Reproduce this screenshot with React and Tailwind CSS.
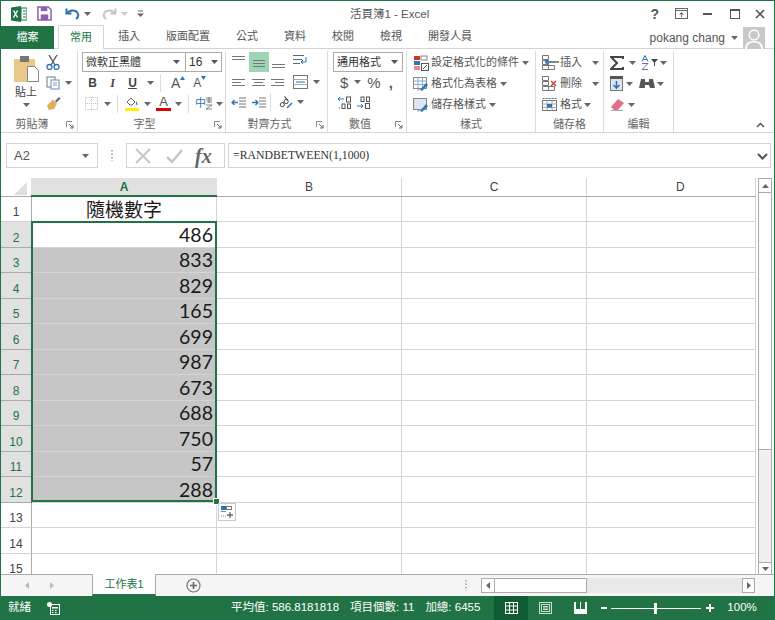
const Caret = ({ c = '#666', className = '' }) => (
  <svg width="7" height="4" viewBox="0 0 7 4" className={`shrink-0 ${className}`}><path d="M0 0h7L3.5 4z" fill={c} /></svg>
);
const Launcher = () => (
  <svg width="8" height="8" viewBox="0 0 8 8" className="shrink-0"><path d="M.5 6V.5H6" fill="none" stroke="#888" /><path d="M3 3l4 4M7 4v3H4" fill="none" stroke="#666" /></svg>
);
const Lines = ({ rows }) => (
  <svg width="16" height="13" viewBox="0 0 16 13">
    {rows.map((r, i) => <rect key={i} x={r[0]} y={r[1]} width={r[2]} height="1" fill="#777" />)}
  </svg>
);
const Group = ({ label, w, children, launcher }) => (
  <div className={`flex flex-col shrink-0 h-[81px] mt-[2px] border-r border-[#dcdcdc] relative ${w}`}>
    <div className="flex-1 min-h-0">{children}</div>
    <div className={`h-[16px] flex items-center justify-center text-[11px] text-[#666] relative ${launcher ? 'pr-[14px]' : ''}`}>
      {label}
      {launcher && <span className="absolute right-[3px] top-[5px]"><Launcher /></span>}
    </div>
  </div>
);
const Row = ({ children, className = '' }) => <div className={`flex items-center h-[21px] ${className}`}>{children}</div>;

const StyleIcon = ({ kind }) => (
  <svg width="16" height="16" viewBox="0 0 16 16" className="shrink-0">
    {kind === 'cond' ? (
      <>
        <rect x="1" y="1" width="6" height="4" fill="#c0392b" /><rect x="8" y="1" width="6" height="4" fill="#fff" stroke="#888" />
        <rect x="1" y="6" width="6" height="4" fill="#2e75b6" /><rect x="1" y="11" width="6" height="4" fill="#e88" />
        <rect x="8.5" y="8.5" width="7" height="7" fill="#fff" stroke="#555" /><path d="M10 14l4-4" stroke="#555" />
      </>
    ) : (
      <>
        <rect x=".5" y="1.5" width="13" height="11" fill={kind === 'cell' ? '#dce6f2' : '#fff'} stroke="#888" />
        {kind === 'table' && <path d="M.5 5h13M.5 8.5h13M5 1.5v11M9.5 1.5v11" stroke="#8aa9d0" />}
        <path d="M7 14l6-7 2 2-6 6z" fill="#2e75b6" /><path d="M4 15c1-2 2-2 3-1.5z" fill="#2e75b6" />
      </>
    )}
  </svg>
);
const CellIcon = ({ kind }) => (
  <svg width="17" height="15" viewBox="0 0 17 15" className="shrink-0">
    {kind === 'fmt' ? (
      <>
        <rect x=".5" y="3.5" width="14" height="10" fill="#fff" stroke="#777" />
        <path d="M5 3.500v10M10 3.500v10M.5 7h14M.5 10.500h14" stroke="#aaa" />
        <rect x="5" y="7" width="5" height="3.500" fill="#2e75b6" />
        <path d="M.5 1.500h14" stroke="#2e75b6" strokeDasharray="2 1" />
      </>
    ) : (
      <>
        <path d="M.5.5h6v4h-6zM.5 10.500h6v4h-6zM6.500 10.500h6v4h-6z" fill="#fff" stroke="#777" />
        <path d="M.5 5.500h6v4h-6z" fill="#fff" stroke="#777" />
        {kind === 'ins'
          ? <><rect x="8" y="6" width="9" height="2" fill="#888" /><path d="M9 7H4m2-2.500L3.500 7 6 9.500" stroke="#2e75b6" fill="none" strokeWidth="1.300" /></>
          : <path d="M9 5l5 5m0-5l-5 5" stroke="#d9432f" strokeWidth="1.500" />}
      </>
    )}
  </svg>
);

const rowVals = [null, 486, 833, 829, 165, 699, 987, 673, 688, 750, 57, 288, null, null, null];

function Sheet() {
  return (
    <div className="flex-1 min-h-0 flex overflow-hidden">
      <div className="flex-1 min-w-0 flex flex-col overflow-hidden pt-[10px]">
        <div className="flex h-[19px] shrink-0 border-b border-[#ababab]">
          <div className="w-[30px] shrink-0 relative">
            <svg width="13" height="13" viewBox="0 0 13 13" className="absolute right-[4px] bottom-[1px]"><path d="M13 0v13H0z" fill="#dfdfdf" /></svg>
          </div>
          <div className="w-[186px] bg-[#e1e1e1] border-b-2 border-[#217346] text-[#217346] text-[12px] flex items-center justify-center font-semibold h-[19px]">A</div>
          <div className="w-[185px] text-[#444] text-[12px] flex items-center justify-center border-r border-[#d4d4d4]">B</div>
          <div className="w-[185px] text-[#444] text-[12px] flex items-center justify-center border-r border-[#d4d4d4]">C</div>
          <div className="w-[169px] text-[#444] text-[12px] flex items-center pl-[89px] border-r border-[#d4d4d4]">D</div>
        </div>
        <div className="relative flex-1 min-h-0 overflow-hidden">
          <div className="h-[382px] grid grid-rows-[repeat(15,1fr)]">
            {rowVals.map((v, i) => {
              const n = i + 1;
              const inSel = n >= 2 && n <= 12;
              return (
                <div key={n} className="flex min-h-0">
                  <div className={`w-[31px] shrink-0 flex items-end justify-center text-[12px] leading-[14px] pb-[2px] border-r border-b ${inSel ? 'bg-[#e1e1e1] text-[#217346] border-[#ababab] border-r-[#217346]' : 'border-[#d4d4d4] border-r-[#ababab] text-[#444]'}`}>{n}</div>
                  {n === 1 ? (
                    <div className="w-[185px] shrink-0 flex items-center justify-center pt-[2px] text-[19px] leading-none text-[#1a1a1a] border-r border-b border-[#d4d4d4]">隨機數字</div>
                  ) : (
                    <div className={`w-[185px] shrink-0 flex items-center justify-end pr-[3px] text-[19.5px] leading-none text-[#1a1a1a] border-r border-b border-[#d4d4d4] font-[family-name:Lato,sans-serif] ${n >= 3 && n <= 12 ? 'bg-[#c6c6c6]' : ''}`}>{v}</div>
                  )}
                  <div className="w-[185px] shrink-0 border-r border-b border-[#d4d4d4]" />
                  <div className="w-[185px] shrink-0 border-r border-b border-[#d4d4d4]" />
                  <div className="w-[169px] shrink-0 border-r border-b border-[#d4d4d4]" />
                </div>
              );
            })}
          </div>
          <div className="absolute left-[30px] top-[24px] w-[186px] h-[281px] border-2 border-[#217346] pointer-events-none" />
          <div className="absolute left-[212px] top-[301px] w-[5px] h-[5px] bg-[#217346] border border-white box-content" />
          <div className="absolute left-[217px] top-[306px] w-[18px] h-[18px] bg-white border border-[#c8c8c8] flex items-center justify-center">
            <svg width="14" height="14" viewBox="0 0 14 14">
              <rect x="1" y="1" width="5" height="4" fill="#2e75b6" /><rect x="6.5" y="1.5" width="5" height="3" fill="#fff" stroke="#777" />
              <path d="M1 6.500h5M1 11h1m1 0h1m1 0h1" stroke="#888" /><path d="M10 7v6M7 10h6" stroke="#666" strokeWidth="1.300" />
            </svg>
          </div>
        </div>
      </div>
      <div className="w-[14px] shrink-0 mr-[2px] ml-[2px] mt-[10px] bg-[#f0f0f0] border-x border-[#ababab] flex flex-col items-stretch">
        <div className="h-[15px] bg-white border-y border-[#ababab] flex items-center justify-center shrink-0"><svg width="7" height="4" viewBox="0 0 7 4"><path d="M0 4h7L3.500 0z" fill="#666" /></svg></div>
        <div className="h-[257px] bg-white border-b border-[#ababab] shrink-0" />
        <div className="flex-1" />
        <div className="h-[12px] bg-white border-t border-[#ababab] flex items-center justify-center shrink-0"><Caret /></div>
      </div>
    </div>
  );
}

export default function App() {
  return (
    <div className="w-[775px] h-[620px] overflow-hidden bg-white flex flex-col border-x border-t border-[#217346] text-[#444] font-[family-name:'Liberation_Sans','Noto_Sans_CJK_TC',sans-serif]">
      {/* title bar */}
      <div className="h-[25px] shrink-0 flex items-center relative">
        <svg width="16" height="16" viewBox="0 0 16 16" className="ml-[10px]">
          <path d="M0 1.500L10 0v16L0 14.500z" fill="#217346" /><path d="M10 2h6v12h-6z" fill="#fff" stroke="#217346" />
          <path d="M12 5h3M12 8h3M12 11h3" stroke="#217346" />
          <path d="M2.500 4.500l4 7m0-7l-4 7" stroke="#fff" strokeWidth="1.400" />
        </svg>
        <svg width="15" height="15" viewBox="0 0 16 16" className="ml-[10px]">
          <path d="M1 1h11l3 3v11H1z" fill="#fff" stroke="#8a5fb0" strokeWidth="1.600" /><rect x="4" y="1" width="7" height="4.500" fill="#8a5fb0" /><rect x="4" y="9" width="8" height="6" fill="#8a5fb0" />
        </svg>
        <svg width="15" height="14" viewBox="0 0 15 14" className="ml-[13px]">
          <path d="M1.500 1.500v5h5" fill="none" stroke="#2b6fb0" strokeWidth="2" /><path d="M2 6.500C4 3 11 2 13 7c.6 2-.5 4-2 5" fill="none" stroke="#2b6fb0" strokeWidth="2" />
        </svg>
        <Caret className="ml-[4px]" />
        <svg width="15" height="14" viewBox="0 0 15 14" className="ml-[11px]">
          <path d="M13.500 1.500v5h-5" fill="none" stroke="#c4c4c4" strokeWidth="2" /><path d="M13 6.500C11 3 4 2 2 7c-.6 2 .5 4 2 5" fill="none" stroke="#c4c4c4" strokeWidth="2" />
        </svg>
        <Caret c="#ccc" className="ml-[4px]" />
        <svg width="7" height="7" viewBox="0 0 7 7" className="ml-[9px]"><path d="M1 1h5" stroke="#666" /><path d="M0 3.500h7L3.500 7z" fill="#666" /></svg>
        <div className="absolute left-[349px] top-[5px] text-[11.5px] leading-[16px] text-[#555]">活頁簿1 - Excel</div>
        <div className="ml-auto flex items-center text-[#555] mr-[9px]">
          <span className="text-[14px] font-bold leading-none">?</span>
          <svg width="13" height="11" viewBox="0 0 13 11" className="ml-[16px]"><rect x=".5" y=".5" width="12" height="10" fill="none" stroke="#666" /><path d="M0 2.500h13" stroke="#666" /><path d="M6.500 4l-2.500 2.500h5zM6 6h1v3H6z" fill="#666" /></svg>
          <div className="ml-[15px] w-[9px] h-[2px] bg-[#555]" />
          <div className="ml-[18px] w-[10px] h-[10px] border border-[#555] border-t-2" />
          <svg width="10" height="10" viewBox="0 0 10 10" className="ml-[15px]"><path d="M1 1l8 8m0-8L1 9" stroke="#555" strokeWidth="1.600" /></svg>
        </div>
      </div>
      {/* tabs */}
      <div className="h-[23px] shrink-0 flex items-end relative text-[11px] text-[#555] border-b border-[#d4d4d4]">
        <div className="w-[53px] h-[23px] bg-[#217346] text-white flex items-center justify-center mb-[-1px]">檔案</div>
        <div className="ml-[4px] w-[46px] h-[24px] bg-white border-x border-t border-[#d4d4d4] border-b-0 text-[#217346] flex items-center justify-center mb-[-1px] relative z-10">常用</div>
        <div className="flex h-[23px] items-center">
          <span className="ml-[14px]">插入</span>
          <span className="ml-[26px]">版面配置</span>
          <span className="ml-[26px]">公式</span>
          <span className="ml-[26px]">資料</span>
          <span className="ml-[26px]">校閱</span>
          <span className="ml-[26px]">檢視</span>
          <span className="ml-[26px]">開發人員</span>
        </div>
        <div className="ml-auto flex items-center h-[23px] mr-[9px] mb-[-1px]">
          <span className="text-[12px] text-[#555]">pokang chang</span>
          <Caret className="ml-[6px]" />
          <div className="ml-[5px] w-[22px] h-[22px] bg-[#c8c8c8] overflow-hidden relative">
            <svg width="22" height="22" viewBox="0 0 22 22"><circle cx="11" cy="8" r="5.500" fill="#fff" /><path d="M2 22c0-6 4-8 9-8s9 2 9 8z" fill="#fff" /><circle cx="11" cy="8" r="4" fill="#c8c8c8" /><path d="M4 22c0-5 3-6.500 7-6.500s7 1.500 7 6.500z" fill="#c8c8c8" /></svg>
          </div>
        </div>
      </div>
      {/* ribbon */}
      <div className="h-[84px] shrink-0 flex border-b border-[#d4d4d4] relative text-[11px] text-[#444]">
        <Group label="剪貼簿" w="w-[77px]" launcher>
          <div className="flex pl-[12px] pt-[4px]">
            <div className="w-[26px] flex flex-col items-center">
              <svg width="26" height="27" viewBox="0 0 26 27">
                <rect x="1" y="4" width="21" height="23" rx="1" fill="#e9c88c" /><rect x="7" y="1" width="9" height="6" fill="#777" />
                <path d="M14.500 11.500h7l4 4v11h-11z" fill="#fff" stroke="#888" />
              </svg>
              <span className="text-[11px] leading-[14px] mt-[3px] whitespace-nowrap">貼上</span>
              <Caret className="mt-[4px]" />
            </div>
            <div className="ml-[7px] flex flex-col gap-[6px]">
              <svg width="14" height="15" viewBox="0 0 14 15"><path d="M3 0l6 10M11 0L5 10" stroke="#555" strokeWidth="1.300" /><circle cx="3.500" cy="12" r="2.500" fill="none" stroke="#2e75b6" strokeWidth="1.300" /><circle cx="10.500" cy="12" r="2.500" fill="none" stroke="#2e75b6" strokeWidth="1.300" /></svg>
              <div className="flex items-center">
                <svg width="14" height="14" viewBox="0 0 14 14"><rect x="1" y="1" width="8" height="10" fill="#fff" stroke="#777" /><rect x="5" y="4" width="8" height="9" fill="#fff" stroke="#5b8fc7" /><path d="M7 7h4M7 9h4" stroke="#999" /></svg>
                <Caret className="ml-[5px]" />
              </div>
              <svg width="15" height="14" viewBox="0 0 15 14"><path d="M9 5l4-4 1.500 1.500-4 4z" fill="#666" /><path d="M1 9.500L7 3.500l4 4-3 5.500-5.500 1z" fill="#e0b060" /></svg>
            </div>
          </div>
        </Group>
        <Group label="字型" w="w-[148px]" launcher>
          <div className="pl-[4px] pt-[1px]">
            <div className="flex h-[20px] w-[140px] border border-[#ababab]">
              <div className="w-[103px] border-r border-[#ababab] flex items-center justify-between pl-[3px] pr-[5px] text-[#333]">微軟正黑體<Caret c="#555" /></div>
              <div className="flex-1 flex items-center justify-between px-[3px] text-[12px] text-[#333]">16<Caret c="#555" /></div>
            </div>
            <Row className="h-[20px]">
              <span className="w-[13px] ml-[4px] font-bold text-[12px] text-center">B</span>
              <span className="w-[13px] ml-[7px] italic font-bold text-[12px] text-center font-[family-name:'Liberation_Serif',serif]">I</span>
              <span className="w-[13px] ml-[7px] font-bold underline text-[12px] text-center">U</span>
              <Caret className="ml-[8px]" />
              <div className="w-px h-[18px] bg-[#dcdcdc] ml-[6px]" />
              <span className="ml-[10px] text-[14px] leading-none text-[#555]">A</span>
              <svg width="5" height="4" viewBox="0 0 5 4" className="mb-[10px]"><path d="M0 4h5L2.500 0z" fill="#2e75b6" /></svg>
              <span className="ml-[8px] text-[12px] leading-none text-[#555]">A</span>
              <svg width="5" height="4" viewBox="0 0 5 4" className="mb-[10px]"><path d="M0 0h5L2.500 4z" fill="#2e75b6" /></svg>
            </Row>
            <Row>
              <svg width="13" height="13" viewBox="0 0 13 13" className="ml-[3px]"><rect x=".5" y=".5" width="12" height="12" fill="none" stroke="#bbb" strokeDasharray="1 1" /><path d="M6.500 0v13M0 6.500h13" stroke="#bbb" strokeDasharray="1 1" /></svg>
              <Caret className="ml-[6px]" />
              <div className="w-px h-[18px] bg-[#dcdcdc] ml-[6px]" />
              <svg width="16" height="15" viewBox="0 0 16 15" className="ml-[6px]"><path d="M3 6l4-4 4 4-3 3H6z" fill="#fff" stroke="#666" /><path d="M12 5c1 2 2 3 1.500 4s-2 0-1.500-4z" fill="#2e75b6" /><rect x="1" y="12" width="14" height="3" fill="#ffef00" /></svg>
              <Caret className="ml-[4px]" />
              <div className="ml-[5px] w-[15px] flex flex-col items-center leading-none">
                <span className="text-[13px] leading-[12px] text-[#555]">A</span>
                <div className="w-[15px] h-[3px] bg-[#e00000]" />
              </div>
              <Caret className="ml-[4px]" />
              <div className="w-px h-[18px] bg-[#dcdcdc] ml-[6px]" />
              <span className="ml-[6px] text-[11px] text-[#2e75b6]">中</span>
              <svg width="7" height="13" viewBox="0 0 7 13"><path d="M0 1h6M0 3h6M1 5h5M3 0v6M0 8h6l-6 4h6" stroke="#666" strokeWidth=".8" fill="none" /></svg>
              <Caret className="ml-[3px]" />
            </Row>
          </div>
        </Group>
        <Group label="對齊方式" w="w-[102px]" launcher>
          <div className="pl-[5px] pt-[1px]">
            <div className="flex items-start h-[20px]">
              <div className="mt-[2px]"><Lines rows={[[1, 2, 13], [1, 5, 13]]} /></div>
              <div className="ml-[2px] w-[20px] h-[20px] bg-[#9fd5b7] flex items-center justify-center"><Lines rows={[[2, 4, 12], [2, 7, 12], [2, 10, 12]]} /></div>
              <div className="ml-[1px] mt-[6px]"><Lines rows={[[2, 6, 13], [2, 9, 13]]} /></div>
              <svg width="16" height="14" viewBox="0 0 16 14" className="ml-[7px] mt-[2px]"><path d="M0 1.500h11M0 5.500h9M0 9.500h7" stroke="#666" /><path d="M13 3v5H8m2-2l-2 2 2 2" stroke="#2e75b6" fill="none" /></svg>
            </div>
            <div className="flex items-center h-[20px]">
              <Lines rows={[[1, 3, 13], [1, 6, 9], [1, 9, 13]]} />
              <div className="ml-[4px]"><Lines rows={[[1, 3, 13], [3, 6, 9], [1, 9, 13]]} /></div>
              <div className="ml-[3px]"><Lines rows={[[1, 3, 13], [5, 6, 9], [1, 9, 13]]} /></div>
              <svg width="16" height="14" viewBox="0 0 16 14" className="ml-[7px]"><rect x=".5" y=".5" width="14" height="13" fill="none" stroke="#777" /><path d="M.5 4.500h14M.5 9.500h14" stroke="#aaa" /><path d="M3 7h9" stroke="#2e75b6" /></svg>
              <Caret className="ml-[4px]" />
            </div>
            <div className="flex items-center h-[20px]">
              <svg width="16" height="13" viewBox="0 0 16 13"><path d="M8 2h7M8 5h7M8 8h7M8 11h7" stroke="#777" /><path d="M7 6.500H1m2.500-2.500L1 6.500 3.500 9" stroke="#2e75b6" fill="none" strokeWidth="1.300" /></svg>
              <svg width="16" height="13" viewBox="0 0 16 13" className="ml-[4px]"><path d="M8 2h7M8 5h7M8 8h7M8 11h7" stroke="#777" /><path d="M1 6.500h6m-2.500-2.500L7 6.500 4.500 9" stroke="#2e75b6" fill="none" strokeWidth="1.300" /></svg>
              <div className="w-px h-[18px] bg-[#dcdcdc] ml-[3px]" />
              <svg width="16" height="15" viewBox="0 0 16 15" className="ml-[7px]"><g transform="rotate(-40 6 7)" stroke="#555" fill="none"><circle cx="3" cy="8" r="2" /><circle cx="8" cy="8" r="2" /><path d="M10 3v5M5 8V7" /></g><path d="M9 13l5-5" stroke="#2e75b6" strokeWidth="1.400" /></svg>
              <Caret className="ml-[3px]" />
            </div>
          </div>
        </Group>
        <Group label="數值" w="w-[79px]" launcher>
          <div className="pl-[5px] pt-[1px]">
            <div className="w-[70px] h-[20px] border border-[#ababab] flex items-center justify-between pl-[3px] pr-[4px] text-[#333]">通用格式<Caret c="#555" /></div>
            <div className="flex items-center h-[20px] text-[#555]">
              <span className="ml-[7px] text-[15px] leading-none">$</span><Caret className="ml-[6px]" />
              <span className="ml-[6px] text-[15px] leading-none">%</span>
              <span className="ml-[8px] text-[15px] font-bold leading-none">,</span>
            </div>
            <div className="flex items-center h-[20px]">
              <svg width="16" height="13" viewBox="0 0 16 13" className="ml-[3px]"><path d="M8 3H2m2-2L2 3l2 2" stroke="#2e75b6" fill="none" /><rect x="10.500" y="1" width="4" height="5" fill="none" stroke="#555" /><rect x="6" y="8" width="3" height="4.500" fill="none" stroke="#555" /><rect x="11.500" y="8" width="3" height="4.500" fill="none" stroke="#555" /><path d="M3 12h1" stroke="#555" /></svg>
              <svg width="16" height="13" viewBox="0 0 16 13" className="ml-[3px]"><rect x="6" y="1" width="3" height="4.500" fill="none" stroke="#555" /><rect x="11.500" y="1" width="3" height="4.500" fill="none" stroke="#555" /><path d="M2 10h6m-2-2l2 2-2 2" stroke="#2e75b6" fill="none" /><rect x="10.500" y="7.500" width="4" height="5" fill="none" stroke="#555" /></svg>
            </div>
          </div>
        </Group>
        <Group label="樣式" w="w-[129px]">
          <div className="pl-[6px] pt-[1px] text-[#555]">
            <Row className="h-[20px]"><StyleIcon kind="cond" /><span className="ml-[2px] whitespace-nowrap">設定格式化的條件</span><Caret className="ml-[3px]" /></Row>
            <Row><StyleIcon kind="table" /><span className="ml-[2px] whitespace-nowrap">格式化為表格</span><Caret className="ml-[3px]" /></Row>
            <Row><StyleIcon kind="cell" /><span className="ml-[2px] whitespace-nowrap">儲存格樣式</span><Caret className="ml-[3px]" /></Row>
          </div>
        </Group>
        <Group label="儲存格" w="w-[68px]">
          <div className="pl-[6px] pt-[1px] text-[#555]">
            <Row className="h-[20px]"><CellIcon kind="ins" /><span className="ml-[1px] w-[30px]">插入</span><Caret className="ml-[2px]" /></Row>
            <Row><CellIcon kind="del" /><span className="ml-[1px] w-[30px]">刪除</span><Caret className="ml-[2px]" /></Row>
            <Row><CellIcon kind="fmt" /><span className="ml-[1px] whitespace-nowrap">格式</span><Caret className="ml-[2px]" /></Row>
          </div>
        </Group>
        <Group label="編輯" w="w-[70px]">
          <div className="pl-[6px] pt-[1px]">
            <Row className="h-[20px]">
              <svg width="14" height="14" viewBox="0 0 14 14"><path d="M13 3V1H1l6 6-6 6h12v-2" fill="none" stroke="#444" strokeWidth="2" /></svg>
              <Caret className="ml-[5px]" />
              <svg width="8" height="15" viewBox="0 0 8 15" className="ml-[5px]"><path d="M1 6.500L4 .5l3 6M2 4.500h4" stroke="#2e75b6" fill="none" /><path d="M1 8.500h6l-6 6h6" stroke="#8a5fb0" fill="none" /></svg>
              <svg width="7" height="7" viewBox="0 0 7 7" className="ml-[2px]"><path d="M0 0h7L4 3.500V7H3V3.500z" fill="#444" /></svg>
              <Caret className="ml-[2px]" />
            </Row>
            <Row>
              <svg width="13" height="15" viewBox="0 0 13 15"><rect x=".5" y=".5" width="12" height="14" fill="#dce6f2" stroke="#777" /><rect x="0" y="0" width="13" height="3" fill="#555" /><path d="M6.500 5v7M3.500 9l3 3 3-3" stroke="#2e75b6" strokeWidth="1.600" fill="none" /></svg>
              <Caret className="ml-[3px]" />
              <svg width="16" height="13" viewBox="0 0 16 13" className="ml-[6px]"><path d="M2 2h4v3h4V2h4l2 9h-5L10 8H6l-.1 3H0z" fill="#555" /></svg>
              <Caret className="ml-[2px]" />
            </Row>
            <Row>
              <svg width="15" height="13" viewBox="0 0 15 13"><path d="M1 9l7-8 6 4-6 7H4z" fill="#e2708a" /><path d="M1 12.500h12" stroke="#aaa" /></svg>
              <Caret className="ml-[3px]" />
            </Row>
          </div>
        </Group>
        <svg width="9" height="6" viewBox="0 0 9 6" className="absolute right-[9px] bottom-[4px]"><path d="M1 5l3.500-3.500L8 5" fill="none" stroke="#555" strokeWidth="1.500" /></svg>
      </div>
      {/* formula bar */}
      <div className="h-[25px] mt-[10px] shrink-0 flex items-stretch">
        <div className="ml-[5px] w-[92px] border border-[#d4d4d4] flex items-center justify-between pl-[7px] pr-[8px] text-[13px] text-[#555]">A2<Caret /></div>
        <div className="w-[28px] flex items-center justify-center">
          <svg width="2" height="11" viewBox="0 0 2 11"><path d="M1 0v11" stroke="#888" strokeDasharray="1.500 2" strokeWidth="1.400" /></svg>
        </div>
        <div className="w-[99px] border border-[#d4d4d4] flex items-center">
          <svg width="16" height="16" viewBox="0 0 16 16" className="ml-[8px]"><path d="M1 1l14 14m0-14L1 15" stroke="#c6c6c6" strokeWidth="2" /></svg>
          <svg width="17" height="14" viewBox="0 0 17 14" className="ml-[15px]"><path d="M1 8l5 5L16 1" stroke="#c6c6c6" strokeWidth="2.500" fill="none" /></svg>
          <span className="ml-[12px] text-[20px] font-bold italic text-[#666] leading-none font-[family-name:'Liberation_Serif',serif]">fx</span>
        </div>
        <div className="ml-[3px] w-[543px] border border-[#d4d4d4] flex items-center pl-[4px] pt-[1px] text-[11.75px] text-[#333] relative font-[family-name:'Liberation_Serif',serif]">
          =RANDBETWEEN(1,1000)
          <svg width="11" height="7" viewBox="0 0 11 7" className="absolute right-[2px] top-[9px]"><path d="M1 1l4.500 4.500L10 1" fill="none" stroke="#555" strokeWidth="2" /></svg>
        </div>
      </div>
      <Sheet />
      {/* sheet tabs */}
      <div className="h-[22px] shrink-0 flex items-stretch bg-[#f5f5f5] border-t border-[#ababab] relative">
        <div className="w-[91px] flex items-center">
          <svg width="4" height="7" viewBox="0 0 4 7" className="ml-[24px]"><path d="M4 0v7L0 3.500z" fill="#bbb" /></svg>
          <svg width="4" height="7" viewBox="0 0 4 7" className="ml-[21px]"><path d="M0 0v7l4-3.500z" fill="#bbb" /></svg>
        </div>
        <div className="w-[64px] bg-white border-x border-[#ababab] border-b-2 border-b-[#217346] -mt-px flex items-center justify-center text-[11px] text-[#217346]">工作表1</div>
        <svg width="15" height="15" viewBox="0 0 15 15" className="ml-[30px] self-center"><circle cx="7.500" cy="7.500" r="6.500" fill="none" stroke="#777" strokeWidth="1.200" /><path d="M7.500 4v7M4 7.500h7" stroke="#666" strokeWidth="1.600" /></svg>
        <svg width="2" height="11" viewBox="0 0 2 11" className="ml-[264px] self-center"><path d="M1 0v11" stroke="#999" strokeDasharray="1.500 2" strokeWidth="1.400" /></svg>
        <div className="ml-[14px] w-[274px] h-[15px] self-center flex bg-[#e9e9e9]">
          <div className="w-[14px] bg-white border border-[#ababab] flex items-center justify-center"><svg width="4" height="7" viewBox="0 0 4 7"><path d="M4 0v7L0 3.500z" fill="#666" /></svg></div>
          <div className="w-[92px] bg-white border-y border-r border-[#ababab]" />
          <div className="flex-1" />
          <div className="w-[13px] bg-white border border-[#ababab] flex items-center justify-center"><svg width="4" height="7" viewBox="0 0 4 7"><path d="M0 0v7l4-3.500z" fill="#666" /></svg></div>
        </div>
      </div>
      {/* status bar */}
      <div className="h-[24px] shrink-0 bg-[#217346] text-white text-[11.5px] flex items-center -mx-px whitespace-nowrap">
        <span className="ml-[8px] shrink-0">就緒</span>
        <svg width="13" height="13" viewBox="0 0 13 13" className="ml-[16px] shrink-0"><circle cx="2.500" cy="2.500" r="2.500" fill="#fff" /><rect x="3.500" y="2.500" width="9" height="10" fill="none" stroke="#fff" /><path d="M5 5h6v1.500H5zM5 8h1.500v1H5zM8 8h1.500v1H8zM5 10h1.500v1H5zM8 10h1.500v1H8z" fill="#fff" /></svg>
        <span className="ml-[171px] shrink-0">平均值: 586.8181818</span>
        <span className="ml-[11px] shrink-0">項目個數: 11</span>
        <span className="ml-[11px] shrink-0">加總: 6455</span>
        <div className="ml-[14px] w-[34px] h-[24px] bg-[#0f5c34] flex items-center justify-center shrink-0">
          <svg width="13" height="12" viewBox="0 0 13 12"><rect x=".5" y=".5" width="12" height="11" fill="none" stroke="#fff" /><path d="M4.500 0v12M8.500 0v12M0 4h13M0 8h13" stroke="#fff" /></svg>
        </div>
        <svg width="13" height="12" viewBox="0 0 13 12" className="ml-[11px] shrink-0"><rect x=".5" y=".5" width="12" height="11" fill="none" stroke="#c9e0d3" /><rect x="2.500" y="2.500" width="8" height="7" fill="none" stroke="#c9e0d3" /><path d="M4 4.500h5M4 6h5M4 7.500h5" stroke="#c9e0d3" /></svg>
        <svg width="13" height="12" viewBox="0 0 13 12" className="ml-[22px] shrink-0"><rect x="0" y="0" width="13" height="12" fill="#fff" /><rect x="2" y="0" width="4" height="7" fill="#217346" /><rect x="7" y="0" width="4" height="7" fill="#217346" /></svg>
        <span className="ml-[14px] w-[6px] h-[2px] bg-white shrink-0" />
        <div className="ml-[4px] w-[90px] h-px bg-white relative shrink-0"><div className="absolute left-[43px] -top-[5px] w-[3px] h-[11px] bg-white" /></div>
        <svg width="8" height="8" viewBox="0 0 8 8" className="ml-[5px] shrink-0"><path d="M4 0v8M0 4h8" stroke="#fff" strokeWidth="2" /></svg>
        <span className="ml-[13px] shrink-0">100%</span>
      </div>
    </div>
  );
}
